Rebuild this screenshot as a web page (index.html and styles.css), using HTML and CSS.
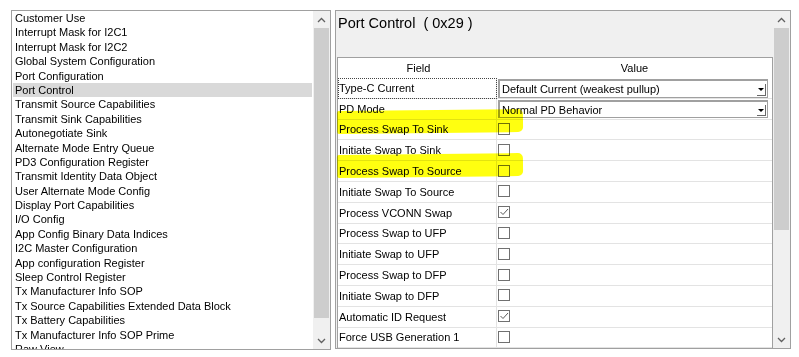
FILE: index.html
```html
<!DOCTYPE html>
<html lang="en">
<head>
    <meta charset="UTF-8">
    <title>Port Control</title>
    <link rel="stylesheet" href="styles.css">
</head>
<body>
    <div class="window">
        <!-- register list -->
        <div class="listbox">
            <ul class="items">
                <li>Customer Use</li>
                <li>Interrupt Mask for I2C1</li>
                <li>Interrupt Mask for I2C2</li>
                <li>Global System Configuration</li>
                <li>Port Configuration</li>
                <li class="selected">Port Control</li>
                <li>Transmit Source Capabilities</li>
                <li>Transmit Sink Capabilities</li>
                <li>Autonegotiate Sink</li>
                <li>Alternate Mode Entry Queue</li>
                <li>PD3 Configuration Register</li>
                <li>Transmit Identity Data Object</li>
                <li>User Alternate Mode Config</li>
                <li>Display Port Capabilities</li>
                <li>I/O Config</li>
                <li>App Config Binary Data Indices</li>
                <li>I2C Master Configuration</li>
                <li>App configuration Register</li>
                <li>Sleep Control Register</li>
                <li>Tx Manufacturer Info SOP</li>
                <li>Tx Source Capabilities Extended Data Block</li>
                <li>Tx Battery Capabilities</li>
                <li>Tx Manufacturer Info SOP Prime</li>
                <li>Raw View</li>
            </ul>
            <div class="vscroll">
                <span class="arrow"><svg width="9" height="6" viewBox="0 0 9 6"><polyline points="1,5 4.5,1.5 8,5" fill="none" stroke="#606060" stroke-width="1.3"/></svg></span>
                <span class="thumb left-thumb"></span>
                <span class="track"></span>
                <span class="arrow"><svg width="9" height="6" viewBox="0 0 9 6"><polyline points="1,1 4.5,4.5 8,1" fill="none" stroke="#606060" stroke-width="1.3"/></svg></span>
            </div>
        </div>

        <!-- register fields -->
        <div class="detail">
            <div class="detail-body">
                <div class="title">Port Control  ( 0x29 )</div>
                <div class="fields">
                    <div class="head">Field</div>
                    <div class="head value-head">Value</div>

                    <div class="field focus">Type-C Current</div>
                    <div class="value"><span class="combo">Default Current (weakest pullup)<span class="drop"></span></span></div>

                    <div class="field">PD Mode</div>
                    <div class="value"><span class="combo second">Normal PD Behavior<span class="drop"></span></span></div>

                    <div class="field">Process Swap To Sink</div>
                    <div class="value"><span class="check"></span></div>

                    <div class="field">Initiate Swap To Sink</div>
                    <div class="value"><span class="check"></span></div>

                    <div class="field">Process Swap To Source</div>
                    <div class="value"><span class="check"></span></div>

                    <div class="field">Initiate Swap To Source</div>
                    <div class="value"><span class="check"></span></div>

                    <div class="field">Process VCONN Swap</div>
                    <div class="value"><span class="check"><svg width="10" height="10" viewBox="0 0 10 10"><polyline points="1.5,5 4,7.5 9,2" fill="none" stroke="#5a5a5a" stroke-width="1"/></svg></span></div>

                    <div class="field">Process Swap to UFP</div>
                    <div class="value"><span class="check"></span></div>

                    <div class="field">Initiate Swap to UFP</div>
                    <div class="value"><span class="check"></span></div>

                    <div class="field">Process Swap to DFP</div>
                    <div class="value"><span class="check"></span></div>

                    <div class="field">Initiate Swap to DFP</div>
                    <div class="value"><span class="check"></span></div>

                    <div class="field">Automatic ID Request</div>
                    <div class="value"><span class="check"><svg width="10" height="10" viewBox="0 0 10 10"><polyline points="1.5,5 4,7.5 9,2" fill="none" stroke="#5a5a5a" stroke-width="1"/></svg></span></div>

                    <div class="field">Force USB Generation 1</div>
                    <div class="value"><span class="check"></span></div>
                </div>

                <!-- highlighter marks -->
                <span class="marker mark-sink"></span>
                <span class="marker mark-source"></span>
            </div>
            <div class="vscroll">
                <span class="arrow"><svg width="9" height="6" viewBox="0 0 9 6"><polyline points="1,5 4.5,1.5 8,5" fill="none" stroke="#606060" stroke-width="1.3"/></svg></span>
                <span class="thumb right-thumb"></span>
                <span class="track"></span>
                <span class="arrow"><svg width="9" height="6" viewBox="0 0 9 6"><polyline points="1,1 4.5,4.5 8,1" fill="none" stroke="#606060" stroke-width="1.3"/></svg></span>
            </div>
        </div>
    </div>
</body>
</html>
```

FILE: styles.css
```css
body {
    margin: 0;
    background-color: #fff;
    font-family: "Liberation Sans", Arial, sans-serif;
    font-size: 11px;
    color: #000;
}
.window {
    display: flex;
    align-items: flex-start;
    gap: 4px;
    padding: 10px 0 0 11px;
}

/* left list */
.listbox {
    display: flex;
    width: 320px;
    height: 340px;
    box-sizing: border-box;
    border: 1px solid #a0a0a0;
    overflow: hidden;
}
.items {
    flex: 1;
    list-style: none;
    margin: 0;
    padding: 0 1px;
    overflow: hidden;
}
.items li {
    height: 14.4px;
    line-height: 14.4px;
    padding-left: 2px;
    white-space: nowrap;
}
.items li.selected {
    background-color: #d9d9d9;
}

/* scrollbars */
.vscroll {
    display: flex;
    flex-direction: column;
    width: 17px;
    flex-shrink: 0;
    background-color: #f0f0f0;
}
.vscroll .arrow {
    display: flex;
    align-items: center;
    justify-content: center;
    height: 17px;
    flex-shrink: 0;
}
.vscroll .thumb {
    margin: 0 1px;
    background-color: #cdcdcd;
}
.vscroll .track {
    flex: 1;
}
.left-thumb {
    height: 290px;
}
.right-thumb {
    height: 202px;
}

/* right panel */
.detail {
    display: flex;
    width: 456px;
    height: 339px;
    box-sizing: border-box;
    border: 1px solid #a0a0a0;
    overflow: hidden;
}
.detail-body {
    position: relative;
    flex: 1;
    background-color: #f0f0f0;
    overflow: hidden;
}
.title {
    height: 46px;
    padding: 4px 0 0 2px;
    box-sizing: border-box;
    font-size: 14.5px;
    white-space: pre;
}
.fields {
    display: grid;
    grid-template-columns: 159px 1fr;
    grid-template-rows: 20px;
    grid-auto-rows: 20.8px;
    margin-left: 1px;
    background-color: #fff;
    border-top: 1px solid #a0a0a0;
    border-left: 1px solid #a0a0a0;
    border-right: 1px solid #a0a0a0;
}
.head {
    display: flex;
    align-items: center;
    justify-content: center;
    padding-left: 2px;
}
.value-head {
    padding-left: 0;
}
.field {
    display: flex;
    align-items: center;
    padding-left: 1px;
    border-right: 1px solid #e3e3e3;
    border-bottom: 1px solid #e3e3e3;
    white-space: nowrap;
}
.field.focus {
    outline: 1px dotted #444;
    outline-offset: -1px;
}
.value {
    display: flex;
    align-items: center;
    border-bottom: 1px solid #e3e3e3;
}
.combo {
    position: relative;
    display: flex;
    align-items: center;
    width: 270px;
    height: 19px;
    box-sizing: border-box;
    padding-left: 2px;
    margin: 1px 0 0 1px;
    border: 2px solid #a0a0a0;
    border-right-width: 1px;
    border-bottom-width: 1px;
}
.combo.second {
    height: 18px;
}
.drop {
    position: absolute;
    right: 1px;
    top: 3px;
    bottom: 1px;
    width: 8px;
    border-right: 1px solid #696969;
    border-bottom: 1px solid #696969;
}
.drop::after {
    content: "";
    position: absolute;
    left: 1px;
    top: 4px;
    border-left: 3px solid transparent;
    border-right: 3px solid transparent;
    border-top: 3px solid #000;
}
.check {
    display: flex;
    align-items: center;
    justify-content: center;
    width: 12px;
    height: 12px;
    box-sizing: border-box;
    margin-left: 1px;
    margin-top: -1px;
    border: 1px solid #707070;
    background-color: #fff;
}

/* highlighter */
.marker {
    position: absolute;
    left: 1px;
    width: 186px;
    height: 23px;
    background-color: #ffff10;
    mix-blend-mode: multiply;
    border-radius: 2px 5px 5px 2px;
    transform: rotate(-0.6deg);
}
.mark-sink {
    top: 99px;
}
.mark-source {
    top: 143px;
}
```
